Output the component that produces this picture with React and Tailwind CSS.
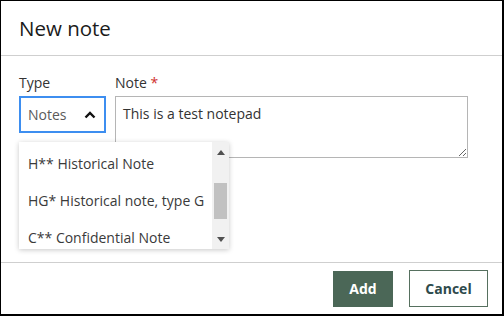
import React from 'react';

const items = ['H** Historical Note', 'HG* Historical note, type G', 'C** Confidential Note'];

const App = () => {
  return (
    <div className="w-[504px] h-[316px] bg-white font-['Open_Sans',sans-serif]">
      <div className="w-full h-full flex flex-col border-t border-l border-r-2 border-b-2 border-black">
        {/* Header */}
        <div className="h-[55px] shrink-0 px-[18px] flex items-center border-b border-[#cfcfcf]">
          <h1 className="text-[20.5px] text-[#1b1b1b] leading-none">New note</h1>
        </div>

        {/* Body */}
        <div className="flex-1 px-[18px] pt-[17px]">
          <div className="flex gap-[9px]">
            <div className="flex flex-col gap-[3px]">
              <label className="text-[14px] leading-[20px] text-[#333]">Type</label>
              <div className="relative">
                <div className="w-[87px] h-[37px] border-2 border-[#3d8ef0] flex items-center justify-between pl-[7px] pr-[8px]">
                  <span className="text-[14px] text-[#5a5a5a]">Notes</span>
                  <svg width="12" height="8" viewBox="0 0 12 8" fill="none">
                    <path d="M1.5 6.5 L6 2 L10.5 6.5" stroke="#111" strokeWidth="2.4" />
                  </svg>
                </div>
                {/* Dropdown */}
                <div className="absolute left-0 top-[46px] w-[210px] h-[107px] bg-white shadow-[0_1px_5px_rgba(0,0,0,0.22)] flex z-10">
                  <ul className="flex-1 overflow-hidden pt-[3px]">
                    {items.map((item) => (
                      <li key={item} className="h-[37px] flex items-center pl-[9px] text-[14px] text-[#3a3a3a] whitespace-nowrap">
                        {item}
                      </li>
                    ))}
                  </ul>
                  <div className="w-[17px] bg-[#f1f1f1] flex flex-col items-center">
                    <div className="h-[20px] flex items-center justify-center">
                      <svg width="8" height="5" viewBox="0 0 8 5"><path d="M0 5 L4 0 L8 5Z" fill="#505050" /></svg>
                    </div>
                    <div className="mt-[21px] w-[13px] h-[36px] bg-[#c1c1c1]" />
                    <div className="flex-1" />
                    <div className="h-[20px] flex items-center justify-center">
                      <svg width="8" height="5" viewBox="0 0 8 5"><path d="M0 0 L8 0 L4 5Z" fill="#505050" /></svg>
                    </div>
                  </div>
                </div>
              </div>
            </div>
            <div className="flex flex-col gap-[3px]">
              <label className="text-[14px] leading-[20px] text-[#333]">
                Note <span className="text-[#d0312d]">*</span>
              </label>
              <textarea
                readOnly
                defaultValue="This is a test notepad"
                className="w-[353px] h-[62px] border border-[#b5b5b5] px-[7px] py-[6px] text-[14px] text-[#333] outline-none"
              />
            </div>
          </div>
        </div>

        {/* Footer */}
        <div className="h-[52px] shrink-0 border-t border-[#cfcfcf] flex items-center justify-end gap-[16px] pr-[14px]">
          <button className="w-[60px] h-[36px] bg-[#4b6757] text-white text-[14px] font-bold">Add</button>
          <button className="w-[79px] h-[37px] border border-[#56705f] text-[#2e4a4c] text-[14px] font-bold">Cancel</button>
        </div>
      </div>
    </div>
  );
};

export default App;
